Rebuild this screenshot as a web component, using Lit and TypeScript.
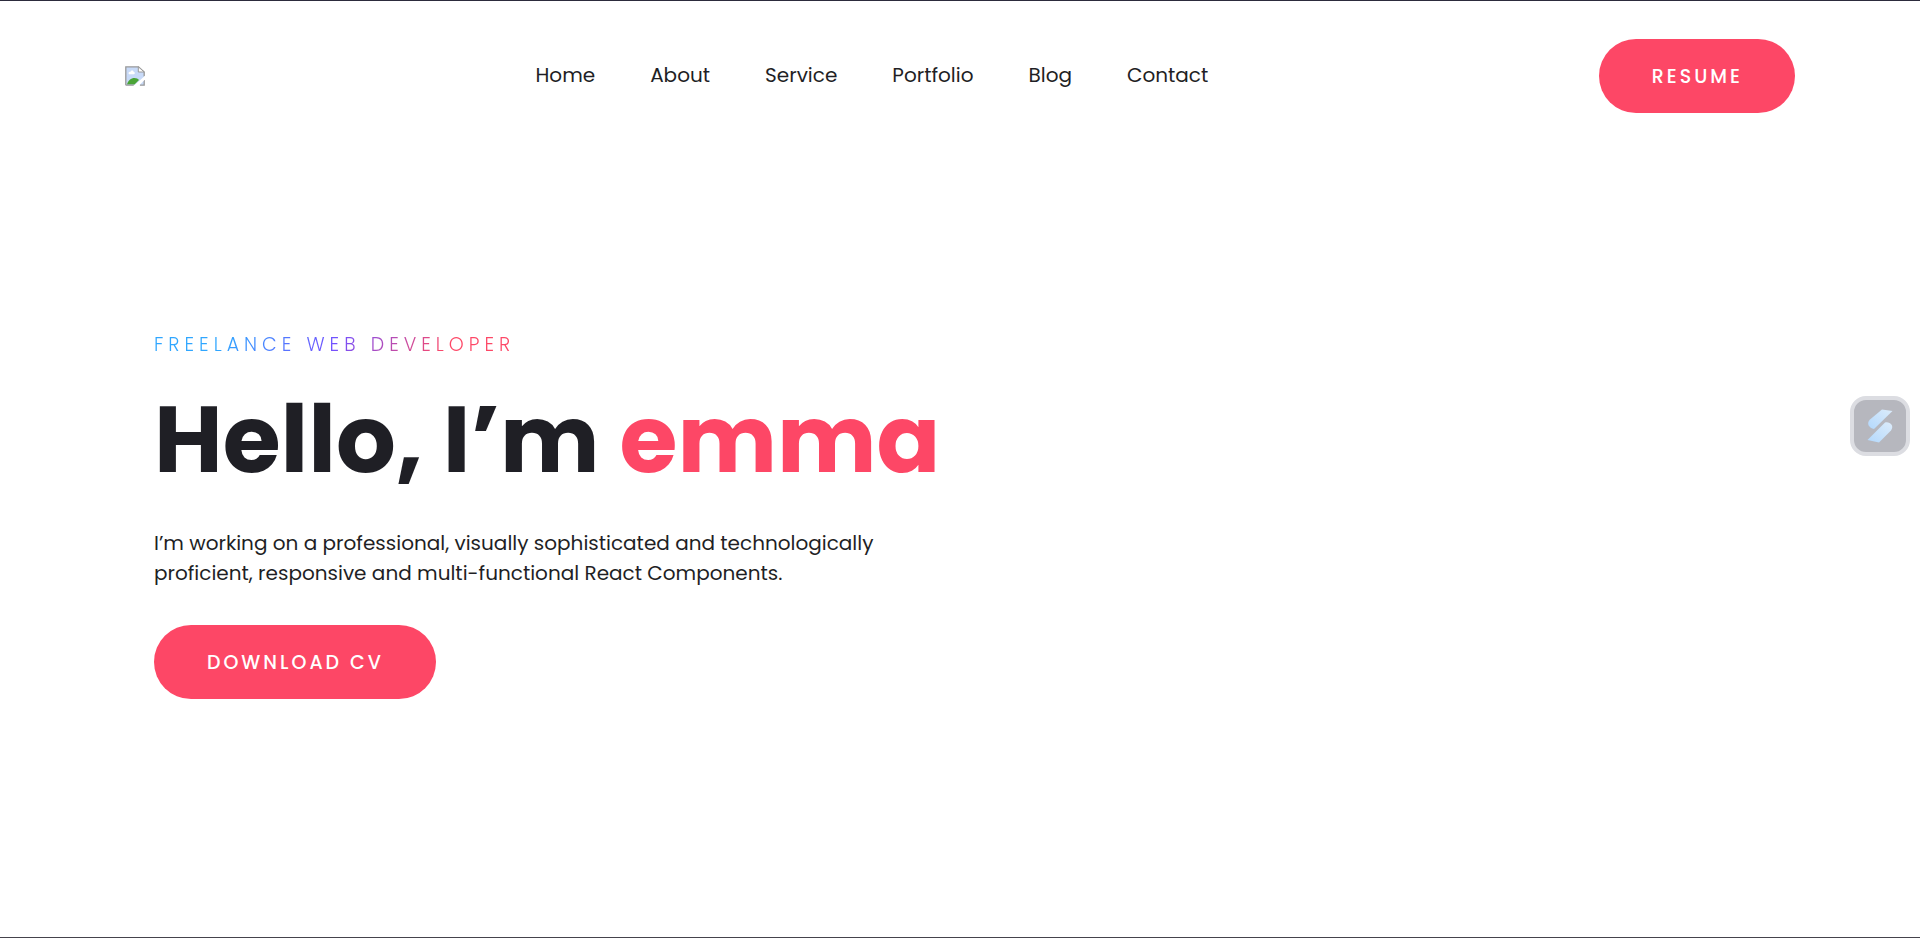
import { LitElement, html, css } from "lit";
import { customElement } from "lit/decorators.js";

const links = ["Home", "About", "Service", "Portfolio", "Blog", "Contact"];

@customElement("app-root")
export class AppRoot extends LitElement {
  static styles = css`
    :host {
      display: flex;
      flex-direction: column;
      box-sizing: border-box;
      min-height: 100vh;
      border-top: 1px solid #2c2b3c;
      border-bottom: 1px solid #45434c;
      background: #fff;
      color: #1f1f25;
      font-family: Poppins, Inter, "Open Sans", sans-serif;
      font-size: 20px;
      line-height: 30px;
    }
    a {
      color: inherit;
      text-decoration: none;
    }
    .header {
      display: flex;
      align-items: center;
      justify-content: space-between;
      padding: 38px 125px;
    }
    .logo,
    .logo svg {
      display: block;
    }
    .nav {
      display: flex;
      gap: 55px;
      padding-bottom: 2px;
    }
    .btn {
      box-sizing: border-box;
      height: 74px;
      padding: 2px 52px 0 53px;
      border: 0;
      border-radius: 37px;
      background: #fd4766;
      color: #fff;
      font: inherit;
      font-size: 19px;
      font-weight: 500;
      letter-spacing: 3px;
      text-transform: uppercase;
      cursor: pointer;
    }
    .hero {
      flex: 1;
      display: flex;
      flex-direction: column;
      align-items: flex-start;
      padding: 178px 154px 0;
    }
    .role {
      font-size: 19px;
      line-height: 32px;
      font-weight: 300;
      letter-spacing: 5px;
      text-transform: uppercase;
      color: transparent;
      background: linear-gradient(120deg, #2fa6ff 20%, #7350ff 50%, #fd4766 80%);
      -webkit-background-clip: text;
      background-clip: text;
    }
    h1 {
      margin: 20px 0 31px;
      font-size: 94px;
      line-height: 116px;
      font-weight: 700;
    }
    .name {
      color: #fd4766;
    }
    .intro {
      margin: 0 0 37px;
      max-width: 760px;
    }
    .widget {
      position: fixed;
      right: 10px;
      top: 396px;
      width: 60px;
      height: 60px;
      padding: 0;
      border: 4px solid #dcdde2;
      border-radius: 16px;
      background: #b6b7be;
      cursor: pointer;
    }
    .widget svg {
      display: block;
      width: 100%;
      height: 100%;
    }
  `;

  render() {
    return html`
      <header class="header">
        <a class="logo" href="#" aria-label="Home page">
          <svg width="20" height="20" viewBox="0 0 20 20">
            <path d="M.8.8h12.7L19.2 6v13.2H.8z" fill="#c8daf8" />
            <path d="M2 18.5c1-4 4-6.5 7.500-6.500 2 0 3.500.8 4.500 2l-4.500 4.500z" fill="#4aa437" />
            <path d="M4 8.200c-1.500-2 .8-3 1.500-2.400.6-2 3.300-1.600 3.200.2 1.600 0 1.500 2.200.2 2.200z" fill="#fff" />
            <path d="M.8 19.200V.8h12.700L19.200 6v4.500M.8 19.200h8M19.200 14v5.200H15" fill="none" stroke="#999" stroke-width="1.300" />
            <path d="M13.300.8V6h5.900z" fill="#fff" stroke="#999" />
            <path d="M8.500 20 20 9.800v3.700L13.500 20z" fill="#fff" />
          </svg>
        </a>
        <nav class="nav">${links.map((l) => html`<a href="#${l.toLowerCase()}">${l}</a>`)}</nav>
        <button class="btn">Resume</button>
      </header>
      <main class="hero">
        <span class="role">Freelance Web Developer</span>
        <h1>Hello, I’m <span class="name">emma</span></h1>
        <p class="intro">
          I’m working on a professional, visually sophisticated and technologically<br />
          proficient, responsive and multi-functional React Components.
        </p>
        <button class="btn">Download CV</button>
      </main>
      <button class="widget" aria-label="Open assistant">
        <svg viewBox="0 0 52 52">
          <defs>
            <linearGradient id="g" x1="0" y1="1" x2="1" y2="0">
              <stop offset="0" stop-color="#b3d8fc" />
              <stop offset="1" stop-color="#dcecfb" />
            </linearGradient>
          </defs>
          <path d="M28 9.500 38.500 11 20 29c-5-1-8-5.500-4-9.500z" fill="url(#g)" />
          <path d="M25 42.500 13.500 40 31 22.500c5-1 9.500 3 6 8z" fill="url(#g)" />
        </svg>
      </button>
    `;
  }
}
